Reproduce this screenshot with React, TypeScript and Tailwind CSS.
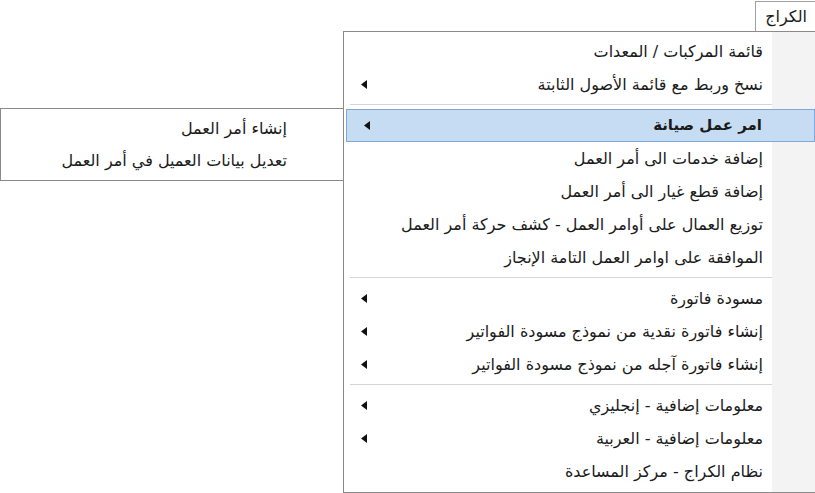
import React from "react";

type Item = { label: string; arrow?: boolean; bold?: boolean; active?: boolean } | "sep";

const items: Item[] = [
  { label: "قائمة المركبات / المعدات" },
  { label: "نسخ وربط مع قائمة الأصول الثابتة", arrow: true },
  "sep",
  { label: "امر عمل صيانة", arrow: true, bold: true, active: true },
  { label: "إضافة خدمات الى أمر العمل" },
  { label: "إضافة قطع غيار الى أمر العمل" },
  { label: "توزيع العمال على أوامر العمل - كشف حركة أمر العمل" },
  { label: "الموافقة على اوامر العمل التامة الإنجاز" },
  "sep",
  { label: "مسودة فاتورة", arrow: true },
  { label: "إنشاء فاتورة نقدية من نموذج مسودة الفواتير", arrow: true },
  { label: "إنشاء فاتورة آجله من نموذج مسودة الفواتير", arrow: true },
  "sep",
  { label: "معلومات إضافية - إنجليزي", arrow: true },
  { label: "معلومات إضافية - العربية", arrow: true },
  { label: "نظام الكراج - مركز المساعدة" },
];

function Arrow() {
  return (
    <svg width="6" height="9" viewBox="0 0 6 9" className="shrink-0">
      <polygon points="6,0 6,9 0,4.5" fill="#111" />
    </svg>
  );
}

export default function App() {
  return (
    <div
      className="relative w-[815px] h-[493px] overflow-hidden bg-white text-[#1b1b1b] text-[16px] leading-none"
      style={{ fontFamily: '"DejaVu Sans", Tahoma, sans-serif' }}
    >
      <div className="flex justify-end pt-[1px]">
        <div
          dir="rtl"
          className="w-[60px] h-[30px] border-t border-l border-[#a0a0a0] bg-white flex items-center pr-[8px]"
        >
          الكراج
        </div>
      </div>
      <div className="ml-[343px] h-[462px] border border-r-0 border-[#8a8a8a] bg-[linear-gradient(to_left,#f3f3f3_43px,#ffffff_43px)] pt-[3px] flex flex-col">
        {items.map((it, i) =>
          it === "sep" ? (
            <div key={i} className="h-[8px] flex items-center pl-[6px] pr-[43px]">
              <div className="w-full border-t border-[#d5d5d5] border-b border-b-white" />
            </div>
          ) : (
            <div
              key={i}
              dir="rtl"
              className={
                "h-[33px] shrink-0 flex items-center justify-between pr-[52px] pl-[17px] " +
                (it.active ? "bg-[#c6dcf3] border border-[#7fa8d8] ml-[2px] font-bold text-[15px]" : "")
              }
            >
              <span>{it.label}</span>
              {it.arrow ? <Arrow /> : null}
            </div>
          )
        )}
      </div>
      <div
        dir="rtl"
        className="absolute left-0 top-[108px] w-[344px] h-[73px] border border-[#8a8a8a] bg-white pt-[4px] flex flex-col"
      >
        <div className="h-[32px] flex items-center pr-[56px]">إنشاء أمر العمل</div>
        <div className="h-[32px] flex items-center pr-[56px]">تعديل بيانات العميل في أمر العمل</div>
      </div>
    </div>
  );
}
